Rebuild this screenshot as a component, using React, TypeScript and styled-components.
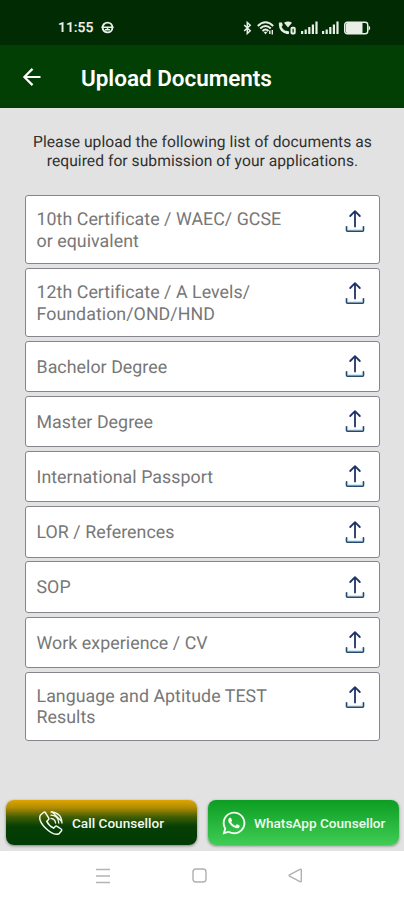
import React from "react";
import styled, { createGlobalStyle } from "styled-components";
import { FaWhatsapp } from "react-icons/fa";

const GlobalStyle = createGlobalStyle`
  *, *::before, *::after { box-sizing: border-box; }
  body {
    margin: 0;
    font-family: Roboto, "Liberation Sans", sans-serif;
    text-rendering: geometricPrecision;
  }
`;

const Screen = styled.div`
  display: flex;
  flex-direction: column;
  width: 404px;
  height: 900px;
  overflow: hidden;
  background: #e2e2e2;
`;

const StatusBar = styled.header`
  flex: none;
  display: flex;
  align-items: center;
  justify-content: space-between;
  height: 45px;
  padding: 10px 33px 0 58px;
  background: #002b03;
  color: #e9efe7;
`;

const StatusGroup = styled.div<{ $gap: number }>`
  display: flex;
  align-items: center;
  gap: ${({ $gap }) => $gap}px;
  svg { display: block; }
`;

const Clock = styled.span`
  font-size: 14px;
  line-height: 16px;
  font-weight: 600;
  letter-spacing: -0.1px;
`;

const AppBar = styled.div`
  flex: none;
  display: flex;
  align-items: center;
  gap: 38px;
  height: 63px;
  padding: 2px 22px 0;
  background: #013f04;
  border-bottom: 1px solid #0b350c;
  color: #fff;
`;

const BackButton = styled.button`
  display: flex;
  padding: 0;
  border: 0;
  background: none;
  color: inherit;
`;

const Title = styled.h1`
  margin: 3px 0 0;
  font-size: 22.5px;
  line-height: 28px;
  font-weight: 600;
  letter-spacing: -0.03px;
  white-space: nowrap;
`;

const Content = styled.main`
  flex: 1;
  display: flex;
  flex-direction: column;
  padding: 25px 24px 0 25px;
`;

const Intro = styled.p`
  margin: 0 0 25.4px;
  color: #303030;
  font-size: 15.6px;
  line-height: 18.5px;
  letter-spacing: 0.05px;
  text-align: center;
  white-space: nowrap;
`;

const DocumentList = styled.ul`
  display: flex;
  flex-direction: column;
  gap: 3.8px;
  margin: 0;
  padding: 0;
  list-style: none;
`;

const DocumentRow = styled.li<{ $tall: boolean }>`
  display: flex;
  justify-content: space-between;
  align-items: flex-start;
  height: ${({ $tall }) => ($tall ? 68.8 : 51.4)}px;
  padding: ${({ $tall }) => ($tall ? 12.5 : 14.5)}px 14px 0 10.5px;
  border: 1.5px solid #85858f;
  border-radius: 3px;
  background: #fff;
`;

const DocumentName = styled.span`
  margin-top: 0.6px;
  color: #777;
  font-size: 17.8px;
  line-height: 21.5px;
  letter-spacing: 0.05px;
  white-space: pre-line;
`;

const UploadButton = styled.button<{ $tall: boolean }>`
  display: flex;
  margin-top: ${({ $tall }) => ($tall ? 0 : -2)}px;
  padding: 0;
  border: 0;
  background: none;
`;

const Actions = styled.div`
  flex: none;
  display: flex;
  gap: 11px;
  height: 51px;
  padding: 0 5px 5px 6px;
`;

const ActionButton = styled.button<{ $fill: string; $inset: number; $gap: number }>`
  flex: none;
  width: 191px;
  display: flex;
  align-items: center;
  gap: ${({ $gap }) => $gap}px;
  height: 45px;
  padding: 1px 0 0 ${({ $inset }) => $inset}px;
  border: 0;
  border-radius: 8px;
  background: ${({ $fill }) => $fill};
  box-shadow: 0 1px 3px rgba(0, 0, 0, 0.45);
  color: #f1faef;
  font-family: inherit;
  svg { flex: none; }
`;

const ActionLabel = styled.span`
  font-size: 13.6px;
  line-height: 18px;
  font-weight: 500;
  white-space: nowrap;
`;

const NavBar = styled.nav`
  flex: none;
  display: flex;
  align-items: center;
  justify-content: space-between;
  height: 49px;
  padding: 0 101px 0 95px;
  background: #fff;
`;

const BadgeIcon = () => (
  <svg width="13" height="13" viewBox="0 0 13 13" fill="none" stroke="currentColor">
    <circle cx="6.5" cy="6.5" r="4.9" strokeWidth="1.9" />
    <path d="M0.5 6.300h12M4 8.800h5M6.500 6v3.500" strokeWidth="1.500" />
  </svg>
);

const BluetoothIcon = () => (
  <svg width="9" height="14" viewBox="0 0 9 14" fill="none" stroke="currentColor" strokeWidth="1.5">
    <path d="M1.2 4l6 5.8-2.9 2.7v-11l2.9 2.7-6 5.8" />
  </svg>
);

const WifiIcon = () => (
  <svg width="17" height="14" viewBox="0 0 17 14" fill="none" stroke="currentColor" strokeWidth="1.9">
    <path d="M.8 5Q8.500-2.500 16.200 5M3.200 7.500Q8.500 2.500 13.800 7.500M5.500 10Q8.500 7 11.500 10" />
    <path d="M6.500 10.800h4L8.500 13.500z" fill="currentColor" stroke="none" />
    <path d="M12.800 13V9.500M15.300 9v4.500" strokeWidth="1.400" />
  </svg>
);

const CallStatusIcon = () => (
  <svg width="18" height="14" viewBox="0 0 18 14" fill="none" stroke="currentColor">
    <path d="M2 2.300C2 8 5 11.500 10.500 12" strokeWidth="2.500" />
    <path d="M1 1.500h3l.8 3L2.500 6zM7.500 9.500l3.500 1v2.300L8 13z" fill="currentColor" stroke="none" />
    <path d="M6 1.800q4-2.500 8 0L10 6.500z" fill="currentColor" stroke="none" />
    <rect x="13.500" y="6.800" width="3.200" height="5.700" rx=".8" strokeWidth="2" />
  </svg>
);

const SignalIcon = () => (
  <svg width="17" height="13" viewBox="0 0 17 13" fill="currentColor">
    <path d="M0 10h2.200v3H0zM3.600 8.500h2.200V13H3.600zM7.200 6h2.200v7H7.200zM10.800 3.500H13V13h-2.200zM14.400.5h2.200V13h-2.200z" />
  </svg>
);

const BatteryIcon = () => (
  <svg width="27" height="14" viewBox="0 0 27 14">
    <rect x=".7" y="1.200" width="23" height="11.600" rx="2.500" fill="none" stroke="currentColor" strokeWidth="1.400" />
    <path d="M3.500 2h15v10h-15q-1.800 0-1.800-1.800V3.800Q1.700 2 3.500 2zM24.500 4.200q3.500 2.800 0 5.600z" fill="currentColor" />
  </svg>
);

const BackIcon = () => (
  <svg width="21" height="20" viewBox="0 0 21 20" fill="none" stroke="currentColor" strokeWidth="2.200">
    <path d="M18.500 10H3M10.500 1.900L2.400 10l8.100 8.100" />
  </svg>
);

const UploadIcon = () => (
  <svg width="20" height="24" viewBox="0 0 20 24" fill="none" strokeLinecap="round" strokeLinejoin="round">
    <path d="M2 18.500v3h16v-3" stroke="#b9dce6" strokeWidth="3" opacity=".6" />
    <path d="M10 17.500V3M5.200 7L10 2.200 14.800 7" stroke="#1d3466" strokeWidth="1.800" />
    <path d="M1.500 17.800v3.500q0 1 1 1h15q1 0 1-1v-3.500" stroke="#27496b" strokeWidth="1.500" />
  </svg>
);

const CallIcon = () => (
  <svg width="26" height="26" viewBox="0 0 26 26" fill="none" stroke="currentColor" strokeWidth="1.500" strokeLinejoin="round" strokeLinecap="round">
    <path d="M5.500 2.500L2.500 5C.8 8 2.500 13 7.500 18s10 7.200 13.500 5.700l2.500-3c.4-.7.200-1.300-.4-1.700l-4-2.700c-.7-.4-1.300-.3-1.900.2l-1.600 1.700c-3-1.500-5.500-4-6.800-6.800l1.600-1.600c.6-.6.600-1.200.2-1.900L7.400 2.700c-.5-.7-1.200-.8-1.900-.2z" />
    <path d="M13 2q10.500.5 11 11M13 5.200q7.300.5 7.800 7.800M13 8.400q4 .5 4.600 4.600M14 1.800l9.500 9.500" strokeWidth="1.300" />
  </svg>
);

const MenuIcon = () => (
  <svg width="16" height="16" viewBox="0 0 16 16" fill="none" stroke="#b4b4b4" strokeWidth="1.400">
    <path d="M1 1.500h14M1 8h14M1 14.500h14" />
  </svg>
);

const HomeIcon = () => (
  <svg width="15" height="15" viewBox="0 0 15 15" fill="none" stroke="#b0b0b0" strokeWidth="1.400">
    <rect x="1" y="1" width="13" height="13" rx="3" />
  </svg>
);

const NavBackIcon = () => (
  <svg width="15" height="15" viewBox="0 0 15 15" fill="none" stroke="#b0b0b0" strokeWidth="1.400" strokeLinejoin="round">
    <path d="M1.500 6.900L12 1.300q1.300-.5 1.300.8v10.800q0 1.300-1.300.8L1.500 8.100q-.8-.6 0-1.200z" />
  </svg>
);

const documents = [
  "10th Certificate / WAEC/ GCSE\nor equivalent",
  "12th Certificate / A Levels/\nFoundation/OND/HND",
  "Bachelor Degree",
  "Master Degree",
  "International Passport",
  "LOR / References",
  "SOP",
  "Work experience / CV",
  "Language and Aptitude TEST\nResults",
];

export default function App() {
  return (
    <Screen>
      <GlobalStyle />
      <StatusBar>
        <StatusGroup $gap={8}>
          <Clock>11:55</Clock>
          <BadgeIcon />
        </StatusGroup>
        <StatusGroup $gap={4.6}>
          <BluetoothIcon />
          <WifiIcon />
          <CallStatusIcon />
          <SignalIcon />
          <SignalIcon />
          <BatteryIcon />
        </StatusGroup>
      </StatusBar>
      <AppBar>
        <BackButton aria-label="Back">
          <BackIcon />
        </BackButton>
        <Title>Upload Documents</Title>
      </AppBar>
      <Content>
        <Intro>
          Please upload the following list of documents as
          <br />
          required for submission of your applications.
        </Intro>
        <DocumentList>
          {documents.map((name) => {
            const tall = name.includes("\n");
            return (
              <DocumentRow key={name} $tall={tall}>
                <DocumentName>{name}</DocumentName>
                <UploadButton $tall={tall} aria-label="Upload">
                  <UploadIcon />
                </UploadButton>
              </DocumentRow>
            );
          })}
        </DocumentList>
      </Content>
      <Actions>
        <ActionButton
          $fill="linear-gradient(#e0a500 0%, #b18c02 17%, #405d04 38%, #073f04 58%, #003b04 100%)"
          $inset={32}
          $gap={8}
        >
          <CallIcon />
          <ActionLabel>Call Counsellor</ActionLabel>
        </ActionButton>
        <ActionButton $fill="linear-gradient(#0c9d22, #40cc56)" $inset={13} $gap={7}>
          <FaWhatsapp size={26} />
          <ActionLabel>WhatsApp Counsellor</ActionLabel>
        </ActionButton>
      </Actions>
      <NavBar>
        <MenuIcon />
        <HomeIcon />
        <NavBackIcon />
      </NavBar>
    </Screen>
  );
}
